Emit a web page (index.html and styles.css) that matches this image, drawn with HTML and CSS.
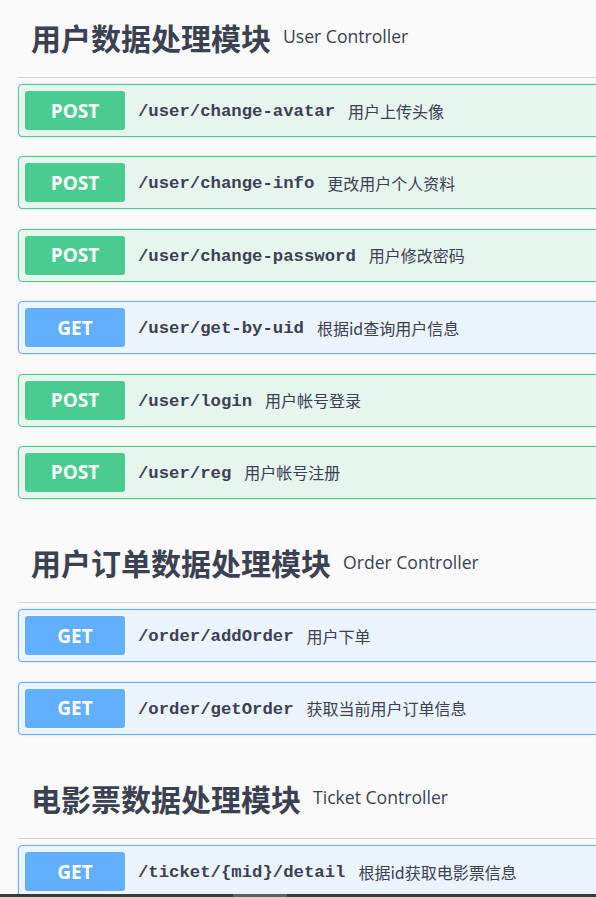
FILE: index.html
```html
<!DOCTYPE html>
<html lang="zh-CN">
<head>
<meta charset="utf-8">
<title>API</title>
<link rel="stylesheet" href="styles.css">
</head>
<body>
<div class="wrap">
  <section class="tag first">
    <h3 class="tag-head"><span class="tag-name">用户数据处理模块</span><small class="tag-desc">User Controller</small></h3>
    <div class="op post"><span class="method">POST</span><span class="path">/user/change-avatar</span><span class="summary">用户上传头像</span></div>
    <div class="op post"><span class="method">POST</span><span class="path">/user/change-info</span><span class="summary">更改用户个人资料</span></div>
    <div class="op post"><span class="method">POST</span><span class="path">/user/change-password</span><span class="summary">用户修改密码</span></div>
    <div class="op get"><span class="method">GET</span><span class="path">/user/get-by-uid</span><span class="summary">根据id查询用户信息</span></div>
    <div class="op post"><span class="method">POST</span><span class="path">/user/login</span><span class="summary">用户帐号登录</span></div>
    <div class="op post"><span class="method">POST</span><span class="path">/user/reg</span><span class="summary">用户帐号注册</span></div>
  </section>
  <section class="tag">
    <h3 class="tag-head"><span class="tag-name">用户订单数据处理模块</span><small class="tag-desc">Order Controller</small></h3>
    <div class="op get"><span class="method">GET</span><span class="path">/order/addOrder</span><span class="summary">用户下单</span></div>
    <div class="op get"><span class="method">GET</span><span class="path">/order/getOrder</span><span class="summary">获取当前用户订单信息</span></div>
  </section>
  <section class="tag">
    <h3 class="tag-head"><span class="tag-name">电影票数据处理模块</span><small class="tag-desc">Ticket Controller</small></h3>
    <div class="op get"><span class="method">GET</span><span class="path">/ticket/{mid}/detail</span><span class="summary">根据id获取电影票信息</span></div>
  </section>
</div>
<div class="hscroll"><div class="thumb"></div></div>
</body>
</html>
```
FILE: styles.css
```css
html, body {
  margin: 0;
  padding: 0;
  background: #fafafa;
  overflow: hidden;
  height: 897px;
}
body {
  font-family: "Open Sans", "Noto Sans CJK SC", sans-serif;
  color: #3b4151;
}
.wrap {
  padding-left: 18px;
  margin-right: -40px;
}
.tag.first {
  margin-top: -7px;
}
.tag-head {
  margin: 0;
  height: 85px;
  box-sizing: border-box;
  display: flex;
  align-items: center;
  padding: 3px 0 0 13px;
  border-bottom: 1px solid #d2d3d6;
  font-weight: normal;
}
.tag-name {
  font-family: "Noto Sans CJK SC", sans-serif;
  font-size: 30px;
  font-weight: 700;
  color: #3b4151;
  line-height: 1;
}
.tag-desc {
  margin-left: 12px;
  font-size: 17.6px;
  color: #3b4151;
  line-height: 1;
  padding-top: 1px;
}
.op {
  margin-top: 6px;
  margin-bottom: 19.4px;
  border: 1px solid;
  border-radius: 4px;
  padding: 6px;
  display: flex;
  align-items: center;
  box-shadow: 0 0 3px rgba(0,0,0,.12);
}
.op + .op { margin-top: 0; }
.op.post {
  background: #e6f5ee;
  border-color: #49cc90;
}
.op.get {
  background: #ebf3fb;
  border-color: #61affe;
}
.method {
  width: 100px;
  height: 39px;
  border-radius: 3px;
  color: #fff;
  font-weight: 700;
  font-size: 19px;
  display: flex;
  align-items: center;
  justify-content: center;
  flex-shrink: 0;
}
.post .method { background: #49cc90; }
.get .method { background: #61affe; }
.path {
  margin-left: 13px;
  padding-top: 2px;
  font-family: "Liberation Mono", monospace;
  font-size: 17.3px;
  font-weight: 700;
  color: #3b4151;
}
.summary {
  margin-left: 13px;
  font-family: "Noto Sans CJK SC", sans-serif;
  font-size: 16px;
  color: #3b4151;
}
.hscroll {
  position: fixed;
  left: 0;
  right: 0;
  bottom: 0;
  height: 3px;
  background: #3a3a3a;
}
.thumb {
  margin-left: 233px;
  width: 54px;
  height: 3px;
  background: #5e5e5e;
}
```
